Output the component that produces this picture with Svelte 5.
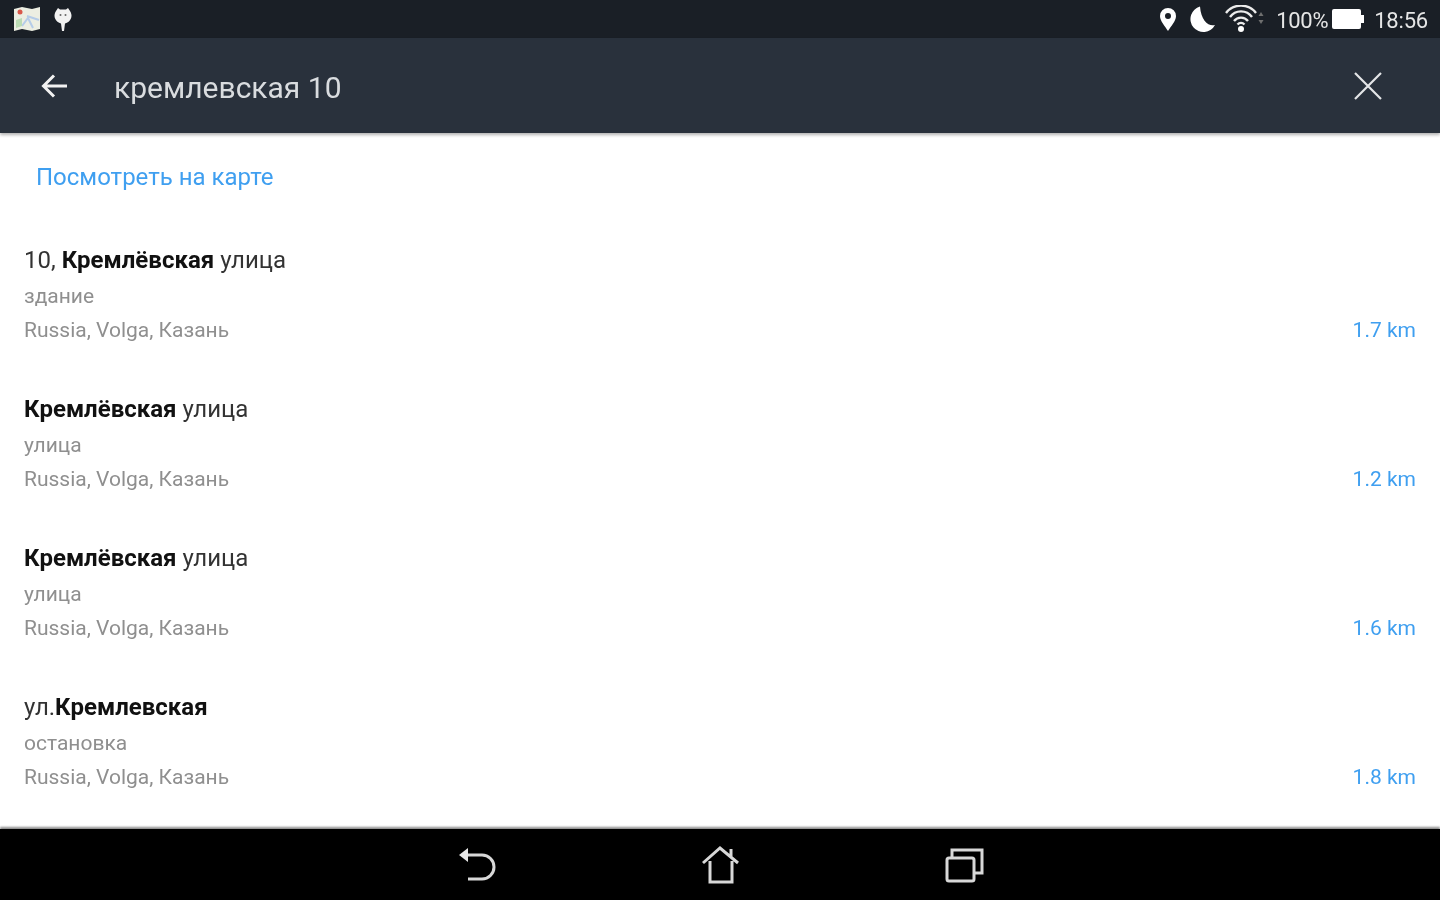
<script>
  const rows = [
    { pre: '10, ', bold: 'Кремлёвская', post: ' улица', type: 'здание', dist: '1.7 km' },
    { pre: '', bold: 'Кремлёвская', post: ' улица', type: 'улица', dist: '1.2 km' },
    { pre: '', bold: 'Кремлёвская', post: ' улица', type: 'улица', dist: '1.6 km' },
    { pre: 'ул.', bold: 'Кремлевская', post: '', type: 'остановка', dist: '1.8 km' }
  ];
</script>

<div class="screen">
  <div class="status">
    <div class="status-left">
      <svg class="ic-map" width="28" height="26" viewBox="0 0 28 26">
        <path d="M1 3 L9 1 L19 3 L27 1 V23 L19 25 L9 23 L1 25 Z" fill="#eceee2"/>
        <path d="M14 10 L26 14 M9 20 L15 12 L20 22" stroke="#b5cce8" stroke-width="2" fill="none"/>
        <path d="M3 14 L9 12 V20 L3 22 Z" fill="#bcdcb4"/>
        <circle cx="7" cy="6" r="2.5" fill="#d9584a"/>
      </svg>
      <svg class="ic-pin" width="20" height="26" viewBox="0 0 20 26">
        <path d="M5 2 L7 3.5 H13 L15 2 L17 5 A8 8 0 0 1 12 17.5 L11 25 H9 L8 17.5 A8 8 0 0 1 3 5 Z" fill="#f2f2f2"/>
        <circle cx="7.5" cy="9" r="1" fill="#666"/>
        <circle cx="12.5" cy="9" r="1" fill="#666"/>
      </svg>
    </div>
    <div class="status-right">
      <svg width="18" height="24" viewBox="0 0 18 24">
        <path fill-rule="evenodd" d="M9 1 A8 8 0 0 1 17 9 C17 14 12 19 9 24 C6 19 1 14 1 9 A8 8 0 0 1 9 1 Z M9 6 A3 3 0 1 0 9 12 A3 3 0 1 0 9 6 Z" fill="#fff"/>
      </svg>
      <svg class="moon" width="29" height="28" viewBox="0 0 29 28">
        <path d="M12 1.5 A13 13 0 1 0 27 20 C21 22 13 16 12 1.5 Z" fill="#fff"/>
      </svg>
      <svg class="wifi" width="40" height="28" viewBox="0 0 40 28">
        <g fill="none" stroke="#ececec" stroke-width="2.4">
          <path d="M1 8 A19 19 0 0 1 31 8"/>
          <path d="M5 12 A13.5 13.5 0 0 1 27 12"/>
          <path d="M9 16 A9 9 0 0 1 23 16"/>
          <path d="M12.5 19.5 A5 5 0 0 1 19.5 19.5"/>
        </g>
        <circle cx="16" cy="24" r="3" fill="#fff"/>
        <path d="M36 7 L38.5 11 H33.5 Z M36 19 L38.5 15 H33.5 Z" fill="#6f6f6f"/>
      </svg>
      <span class="pct">100%</span>
      <svg class="batt" width="32" height="22" viewBox="0 0 32 22">
        <rect x="0" y="1" width="29" height="20" rx="2" fill="#fff"/>
        <rect x="29" y="7" width="3" height="8" fill="#fff"/>
      </svg>
      <span class="time">18:56</span>
    </div>
  </div>

  <header class="bar">
    <svg class="back" width="30" height="30" viewBox="0 0 30 30">
      <path d="M27 15 H4 M14 4.5 L3.5 15 L14 25.5" fill="none" stroke="#f2f2f2" stroke-width="3"/>
    </svg>
    <div class="query">кремлевская 10</div>
    <svg class="close" width="30" height="30" viewBox="0 0 30 30">
      <path d="M2 2 L28 28 M28 2 L2 28" stroke="#e4e6e8" stroke-width="2.2" fill="none"/>
    </svg>
  </header>

  <main class="content">
    <div class="link">Посмотреть на карте</div>
    <ul class="list">
      {#each rows as r}
        <li class="row">
          <div class="title">{r.pre}<b>{r.bold}</b>{r.post}</div>
          <div class="type">{r.type}</div>
          <div class="line">
            <span class="addr">Russia, Volga, Казань</span>
            <span class="dist">{r.dist}</span>
          </div>
        </li>
      {/each}
    </ul>
  </main>

  <nav class="nav">
    <svg width="40" height="38" viewBox="0 0 40 38">
      <path d="M9 9 H25 A11.5 11.5 0 0 1 25 33 H11" fill="none" stroke="#d8d8d8" stroke-width="3"/>
      <path d="M11 2 L2 9 L11 16 Z" fill="#e8e8e8"/>
    </svg>
    <svg width="40" height="40" viewBox="0 0 40 40">
      <path d="M2 18 L19 3 L37 18 M30 4 V12 M9 16 V37 H31 V16" fill="none" stroke="#d8d8d8" stroke-width="3"/>
    </svg>
    <svg width="40" height="36" viewBox="0 0 40 36">
      <rect x="2" y="11" width="27" height="23" rx="2" fill="none" stroke="#d8d8d8" stroke-width="3"/>
      <path d="M7 10 V3 H37 V26 H30" fill="none" stroke="#d8d8d8" stroke-width="3"/>
    </svg>
  </nav>
</div>

<style>
  :global(body) { margin: 0; background: #fff; }
  .screen {
    width: 1440px;
    height: 900px;
    display: flex;
    flex-direction: column;
    overflow: hidden;
    font-family: Roboto, "Noto Sans", sans-serif;
    background: #fff;
    filter: blur(0.7px);
  }
  .status {
    height: 38px;
    flex: none;
    background: #1a1f26;
    display: flex;
    justify-content: space-between;
    align-items: center;
    padding: 0 12px 0 13px;
    box-sizing: border-box;
  }
  .status-left, .status-right { display: flex; align-items: center; }
  .ic-pin { margin-left: 12px; }
  .status-right { color: #e6e6e6; font-size: 22px; }
  .status-right span { position: relative; top: 1px; }
  .moon { margin-left: 11px; }
  .wifi { margin-left: 8px; }
  .pct { margin-left: 11px; letter-spacing: -0.3px; }
  .batt { margin-left: 4px; }
  .time { margin-left: 10px; letter-spacing: -0.2px; }
  .bar {
    height: 95px;
    flex: none;
    background: #29313c;
    display: flex;
    align-items: center;
    padding: 0 57px 0 40px;
    box-sizing: border-box;
    box-shadow: 0 2px 3px rgba(0,0,0,.3);
    position: relative;
  }
  .back { flex: none; }
  .query { flex: 1; margin-left: 44px; margin-top: 4px; font-size: 30px; color: #d9dcdf; }
  .close { flex: none; }
  .content { flex: 1; min-height: 0; overflow: hidden; }
  .link { color: #3f9ff0; font-size: 24px; line-height: 28px; padding: 30px 0 0 36px; }
  .list { list-style: none; margin: 52px 0 0; padding: 0 24px; }
  .row { height: 149px; }
  .title { color: #333; font-size: 24px; line-height: 34px; }
  .title b { font-weight: 700; color: #111; }
  .type { color: #8f8f8f; font-size: 21px; line-height: 26px; margin-top: 6px; }
  .line { display: flex; justify-content: space-between; line-height: 26px; margin-top: 8px; font-size: 21px; }
  .addr { color: #8f8f8f; }
  .dist { color: #3f9ff0; }
  .nav {
    height: 71px;
    flex: none;
    background: #000;
    display: flex;
    align-items: center;
    justify-content: center;
    gap: 204px;
    padding-left: 2px;
    box-shadow: 0 -2px 2px rgba(0,0,0,.45);
  }
</style>
